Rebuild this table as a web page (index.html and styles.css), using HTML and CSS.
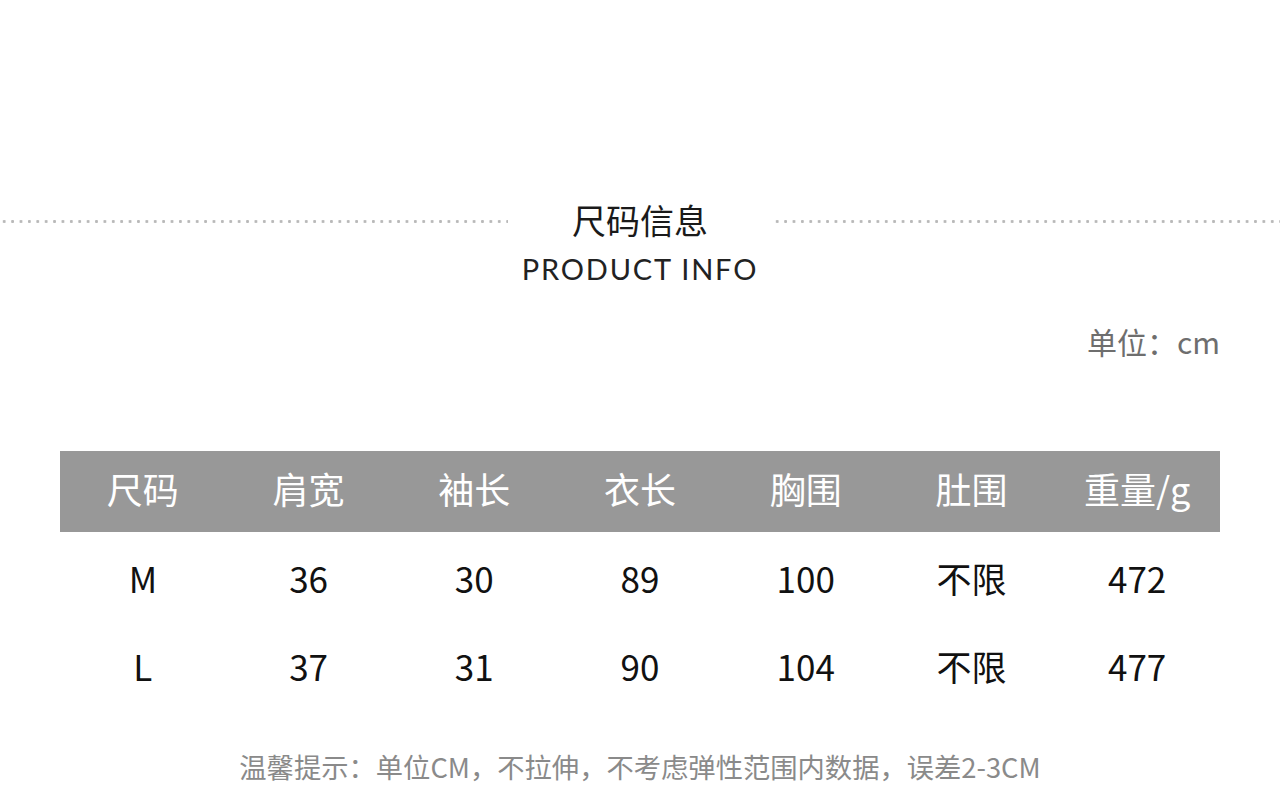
FILE: index.html
```html
<!DOCTYPE html>
<html lang="zh-CN">
<head>
<meta charset="utf-8">
<title>尺码信息</title>
<link rel="stylesheet" href="styles.css">
</head>
<body>
<div class="page">
  <div class="title-row">
    <span class="dots"></span>
    <h1 class="title">尺码信息</h1>
    <span class="dots"></span>
  </div>
  <div class="subtitle">PRODUCT INFO</div>
  <div class="unit">单位：cm</div>
  <div class="size-table">
    <div class="row head">
      <div class="cell">尺码</div>
      <div class="cell">肩宽</div>
      <div class="cell">袖长</div>
      <div class="cell">衣长</div>
      <div class="cell">胸围</div>
      <div class="cell">肚围</div>
      <div class="cell">重量/g</div>
    </div>
    <div class="body">
      <div class="row">
        <div class="cell">M</div>
        <div class="cell">36</div>
        <div class="cell">30</div>
        <div class="cell">89</div>
        <div class="cell">100</div>
        <div class="cell">不限</div>
        <div class="cell">472</div>
      </div>
      <div class="row">
        <div class="cell">L</div>
        <div class="cell">37</div>
        <div class="cell">31</div>
        <div class="cell">90</div>
        <div class="cell">104</div>
        <div class="cell">不限</div>
        <div class="cell">477</div>
      </div>
    </div>
  </div>
  <div class="note">温馨提示：单位CM，不拉伸，不考虑弹性范围内数据，误差2-3CM</div>
</div>
</body>
</html>
```

FILE: styles.css
```css
* { box-sizing: border-box; }
html, body { margin: 0; padding: 0; background: #fff; }
body {
  font-family: "Noto Sans CJK SC", "Noto Sans", sans-serif;
  color: #111;
  width: 1280px;
  height: 790px;
  overflow: hidden;
}
.page {
  padding-top: 200px;
}
.title-row {
  display: flex;
  align-items: center;
  height: 40px;
}
.dots {
  flex: 1;
  height: 3px;
  background-image: radial-gradient(circle, #b9b9b9 1.3px, transparent 1.6px);
  background-size: 8.4px 3px;
  background-repeat: repeat-x;
  margin-top: 2px;
}
.title {
  margin: 0;
  width: 265px;
  text-align: center;
  font-size: 34px;
  line-height: 40px;
  font-weight: 400;
  color: #1a1a1a;
}
.subtitle {
  text-align: center;
  font-family: "Lato", "Liberation Sans", sans-serif;
  font-size: 29px;
  line-height: 36px;
  height: 36px;
  margin-top: 11px;
  color: #222;
  letter-spacing: 1.8px;
}
.unit {
  margin-top: 34px;
  padding-right: 60px;
  text-align: right;
  font-size: 30px;
  line-height: 40px;
  color: #6e6e6e;
}
.size-table {
  margin: 90px 60px 0;
}
.row {
  display: grid;
  grid-template-columns: repeat(7, 1fr);
  align-items: center;
}
.row.head {
  height: 81px;
  background: #989898;
  color: #fff;
  padding-bottom: 8px;
}
.row.head .cell {
  font-size: 36px;
}
.body {
  padding-top: 2px;
}
.body .row {
  height: 88px;
}
.cell {
  text-align: center;
  font-size: 35px;
  line-height: 40px;
}
.note {
  margin-top: 38px;
  text-align: center;
  font-size: 27.3px;
  line-height: 36px;
  color: #8a8a8a;
}
```
